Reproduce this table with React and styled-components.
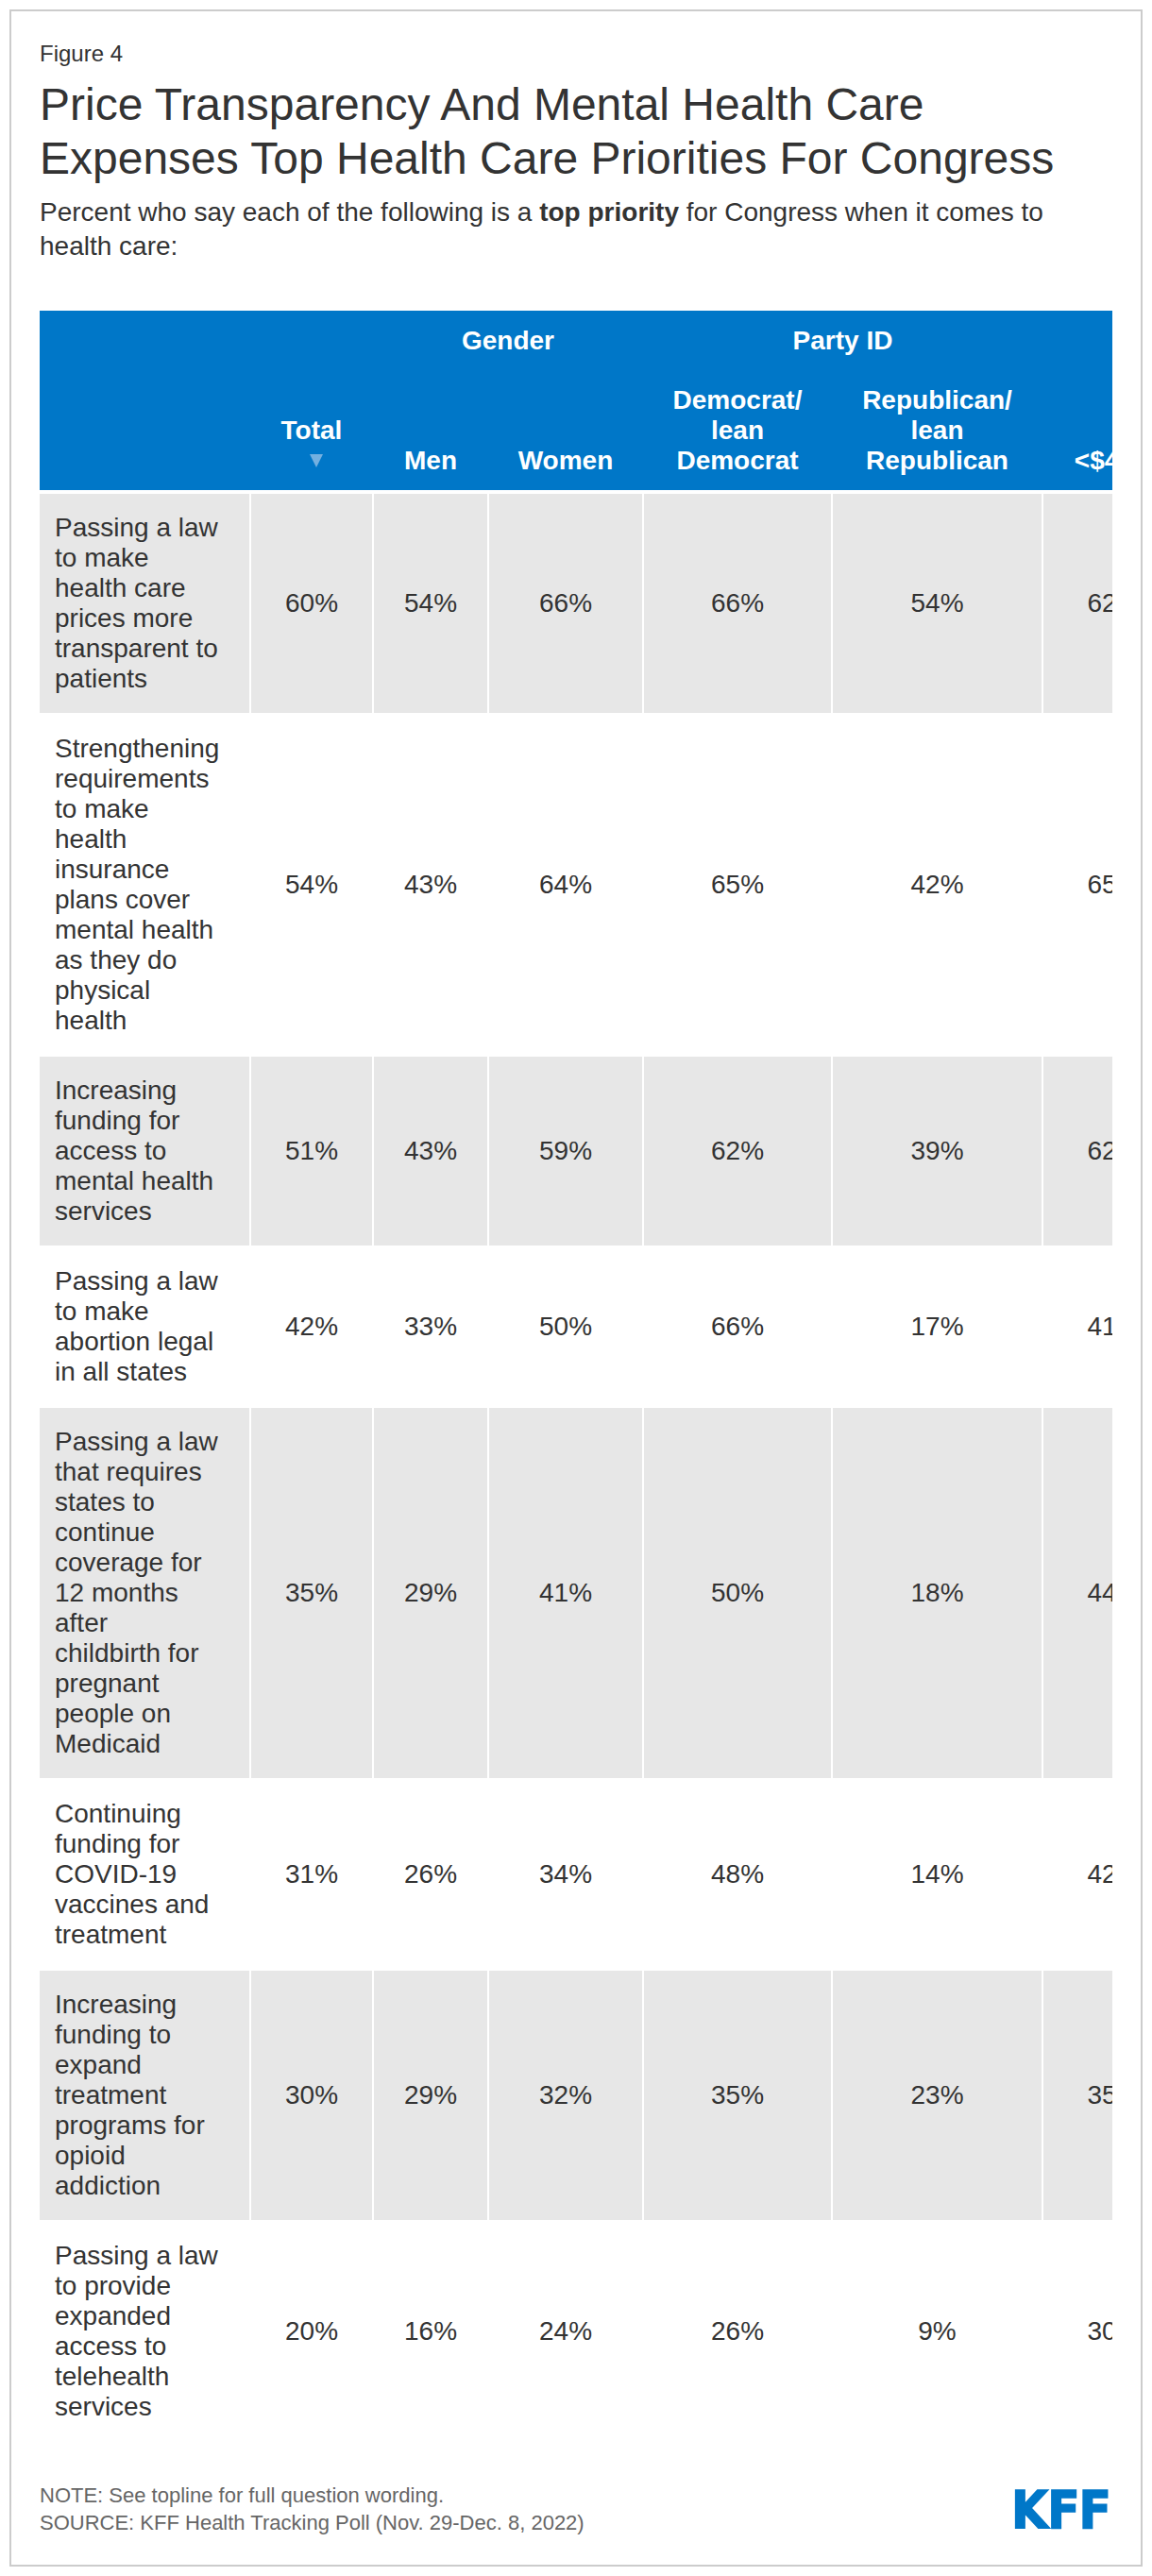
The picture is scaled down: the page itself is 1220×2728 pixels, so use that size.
import React from 'react';
import styled, { createGlobalStyle } from 'styled-components';

const COLUMNS = '222px 128px 120px 162px 198px 221px 149px';

const rows = [
  { label: 'Passing a law to make health care prices more transparent to patients', values: [60, 54, 66, 66, 54, 62] },
  { label: 'Strengthening requirements to make health insurance plans cover mental health as they do physical health', values: [54, 43, 64, 65, 42, 65] },
  { label: 'Increasing funding for access to mental health services', values: [51, 43, 59, 62, 39, 62] },
  { label: 'Passing a law to make abortion legal in all states', values: [42, 33, 50, 66, 17, 41] },
  { label: 'Passing a law that requires states to continue coverage for 12 months after childbirth for pregnant people on Medicaid', values: [35, 29, 41, 50, 18, 44] },
  { label: 'Continuing funding for COVID-19 vaccines and treatment', values: [31, 26, 34, 48, 14, 42] },
  { label: 'Increasing funding to expand treatment programs for opioid addiction', values: [30, 29, 32, 35, 23, 35] },
  { label: 'Passing a law to provide expanded access to telehealth services', values: [20, 16, 24, 26, 9, 30] },
];

const GlobalStyle = createGlobalStyle`
  html, body {
    margin: 0;
    padding: 0;
    background: #ffffff;
  }
  body {
    font-family: "Liberation Sans", Arial, Helvetica, sans-serif;
    color: #333333;
  }
`;

const Page = styled.div`
  padding: 10px;
`;

const Frame = styled.div`
  box-sizing: border-box;
  min-height: calc(100vh - 20px);
  display: flex;
  flex-direction: column;
  border: 2px solid #cccccc;
  padding: 31px 30px 30px;
`;

const FigureLabel = styled.div`
  font-size: 24px;
  line-height: 28px;
  color: #333333;
`;

const Title = styled.h1`
  margin: 11px 0 0;
  font-size: 48px;
  line-height: 57px;
  font-weight: 400;
  color: #333333;
`;

const Subtitle = styled.p`
  margin: 11px 0 0;
  font-size: 28px;
  line-height: 36px;
  color: #333333;

  b {
    font-weight: 700;
  }
`;

const TableScroll = styled.div`
  margin-top: 50px;
  overflow: hidden;
`;

const TableInner = styled.div`
  width: max-content;
`;

const HeaderGrid = styled.div`
  display: grid;
  grid-template-columns: ${COLUMNS};
  column-gap: 2px;
  background: #0077c8;
`;

const HeaderCell = styled.div`
  grid-column: span ${(p) => p.$span || 1};
  display: flex;
  flex-direction: column;
  justify-content: flex-end;
  align-items: center;
  padding: 16px 8px 15px;
  font-size: 28px;
  line-height: 32px;
  font-weight: 700;
  color: #ffffff;
  text-align: center;
`;

const SortArrow = styled.svg`
  display: block;
  width: 16px;
  height: 16px;
  margin: 8px 0 8px 10px;
`;

const BodyGrid = styled.div`
  margin-top: 4px;
  display: grid;
  grid-template-columns: ${COLUMNS};
  gap: 2px;
  background: #ffffff;
`;

const Cell = styled.div`
  display: flex;
  align-items: center;
  justify-content: ${(p) => (p.$label ? 'flex-start' : 'center')};
  padding: ${(p) => (p.$label ? '20px 32px 20px 16px' : '20px 16px')};
  background: ${(p) => (p.$shade ? '#e7e7e7' : '#ffffff')};
  font-size: 28px;
  line-height: 32px;
  color: #333333;
  white-space: ${(p) => (p.$label ? 'normal' : 'nowrap')};
`;

const Footer = styled.div`
  margin-top: auto;
  padding-top: 41px;
  display: flex;
  justify-content: space-between;
  align-items: center;
`;

const Notes = styled.div`
  font-size: 22px;
  line-height: 28.3px;
  color: #666666;
`;

const Logo = styled.div`
  font-family: "Liberation Sans Narrow", "DejaVu Sans Condensed", "Liberation Sans", sans-serif;
  font-weight: 700;
  font-size: 56px;
  line-height: 40px;
  height: 40px;
  color: #0077c8;
  letter-spacing: -1px;
  margin-right: 2px;
  -webkit-text-stroke: 1.5px #0077c8;
`;

export default function App() {
  return (
    <Page>
      <GlobalStyle />
      <Frame>
        <FigureLabel>Figure 4</FigureLabel>
        <Title>
          Price Transparency And Mental Health Care Expenses Top Health Care Priorities For Congress
        </Title>
        <Subtitle>
          Percent who say each of the following is a <b>top priority</b> for Congress when it comes to
          health care:
        </Subtitle>

        <TableScroll>
          <TableInner>
            <HeaderGrid>
              <HeaderCell $span={2} />
              <HeaderCell $span={2}>Gender</HeaderCell>
              <HeaderCell $span={2}>Party ID</HeaderCell>
              <HeaderCell />

              <HeaderCell />
              <HeaderCell>
                Total
                <SortArrow viewBox="0 0 16 16" aria-hidden="true">
                  <path d="M1 1 L15 1 L8 15 Z" fill="#74b0e0" />
                </SortArrow>
              </HeaderCell>
              <HeaderCell>Men</HeaderCell>
              <HeaderCell>Women</HeaderCell>
              <HeaderCell>Democrat/ lean Democrat</HeaderCell>
              <HeaderCell>Republican/ lean Republican</HeaderCell>
              <HeaderCell>&lt;$40K</HeaderCell>
            </HeaderGrid>

            <BodyGrid>
              {rows.map((row, i) => (
                <React.Fragment key={row.label}>
                  <Cell $label $shade={i % 2 === 0}>{row.label}</Cell>
                  {row.values.map((v, j) => (
                    <Cell key={j} $shade={i % 2 === 0}>{v}%</Cell>
                  ))}
                </React.Fragment>
              ))}
            </BodyGrid>
          </TableInner>
        </TableScroll>

        <Footer>
          <Notes>
            NOTE: See topline for full question wording.
            <br />
            SOURCE: KFF Health Tracking Poll (Nov. 29-Dec. 8, 2022)
          </Notes>
          <Logo>KFF</Logo>
        </Footer>
      </Frame>
    </Page>
  );
}
